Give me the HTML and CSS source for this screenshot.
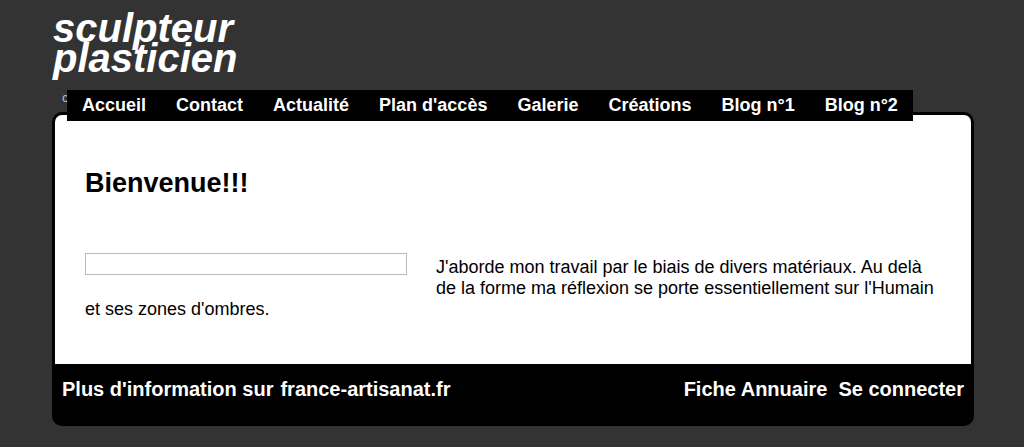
FILE: index.html
```
<!DOCTYPE html>
<html>
<head>
	<meta charset="UTF-8">
	<title>sculpteur plasticien</title>
	<link rel="stylesheet" href="styles.css">
</head>
<body>
	<div class="page">
		<header class="header">
			<div class="title">sculpteur<br>plasticien</div>
			<div class="tagline">c</div>
			<nav class="nav">
				<a href="#">Accueil</a>
				<a href="#">Contact</a>
				<a href="#">Actualité</a>
				<a href="#">Plan d'accès</a>
				<a href="#">Galerie</a>
				<a href="#">Créations</a>
				<a href="#">Blog n°1</a>
				<a href="#">Blog n°2</a>
			</nav>
		</header>

		<div class="card">
			<div class="content">
				<h1>Bienvenue!!!</h1>
				<div class="intro">
					<div class="frame"></div>
					<p>J'aborde mon travail par le biais de divers matériaux. Au delà de la forme ma réflexion se porte essentiellement sur l'Humain et ses zones d'ombres.</p>
				</div>
			</div>
			<footer class="footer">
				<div class="footer-left">
					<span>Plus d'information sur</span>
					<a href="#">france-artisanat.fr</a>
				</div>
				<div class="footer-right">
					<a href="#">Fiche Annuaire</a>
					<a href="#">Se connecter</a>
				</div>
			</footer>
		</div>
	</div>
</body>
</html>
```

FILE: styles.css
```
body {
	margin: 0;
	background: #333;
	font-family: "Liberation Sans", Arial, sans-serif;
	color: #000;
}

.page { width: 922px; margin-left: 52px; }

/* en-tête */
.title {
	padding: 13px 0 0 1px;
	color: #fff;
	font-size: 40px;
	font-weight: bold;
	font-style: italic;
	line-height: 30px;
}
.tagline {
	margin: 17px 0 0 10px;
	color: #bbb;
	font-size: 13px;
	line-height: 15px;
}

.nav {
	position: relative;
	z-index: 1;
	display: flex;
	width: fit-content;
	margin: -15px 0 0 15px;
	background: #000;
	white-space: nowrap;
}
.nav a {
	padding: 0 15px;
	color: #fff;
	font-size: 18px;
	font-weight: bold;
	line-height: 31px;
	text-decoration: none;
}

/* bloc principal */
.card {
	margin-top: -9px;
	padding: 3px;
	background: #000;
	border-radius: 10px;
}
.content {
	padding: 53px 30px 44px;
	background: #fff;
	border-radius: 7px 7px 0 0;
}
h1 {
	margin: 0;
	font-size: 27px;
	line-height: 31px;
}

.intro { margin-top: 54px; }
.frame {
	float: left;
	width: 320px;
	height: 20px;
	margin: 0 29px 10px 0;
	border: 1px solid #bbb;
}
.intro p {
	margin: 0;
	padding-top: 4px;
	font-size: 18px;
	line-height: 21px;
}

/* pied */
.footer {
	display: flex;
	justify-content: space-between;
	padding: 14px 7px 22px;
	color: #fff;
	font-size: 20px;
	font-weight: bold;
	line-height: 23px;
}
.footer a { color: #fff; text-decoration: none; }
.footer-left { display: flex; gap: 7px; }
.footer-right { display: flex; gap: 11px; }
```
